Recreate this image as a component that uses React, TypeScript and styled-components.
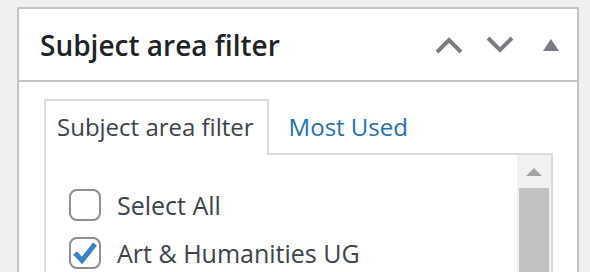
import React from "react";
import styled, { createGlobalStyle } from "styled-components";

const Global = createGlobalStyle`
  html, body { margin: 0; padding: 0; background: #f0f0f1; }
  body { font-family: "Open Sans", "Noto Sans", sans-serif; color: #3c434a; }
  * { box-sizing: border-box; }
`;

const Page = styled.div`
  padding: 7px 11px 0 17px;
`;

const Postbox = styled.section`
  background: #fff;
  border: 2px solid #c3c4c7;
  border-bottom: none;
`;

const Header = styled.header`
  display: flex;
  align-items: center;
  height: 73px;
  border-bottom: 2px solid #c3c4c7;
  padding-left: 21px;
`;

const Title = styled.h2`
  flex: 1;
  margin: 0;
  font-size: 28px;
  font-weight: 600;
  color: #1d2327;
`;

const HandleButton = styled.button<{ $w: number }>`
  width: ${(p) => p.$w}px;
  height: 71px;
  padding: 0;
  border: 0;
  background: transparent;
  display: flex;
  align-items: center;
  justify-content: center;
  color: #787c82;
  cursor: pointer;
`;

const Inside = styled.div`
  padding: 17px 24px 0 25px;
`;

const TabList = styled.ul`
  display: flex;
  align-items: flex-end;
  margin: 0 0 -2px;
  padding: 0;
  list-style: none;
  position: relative;
  z-index: 1;
`;

const Tab = styled.li<{ $active?: boolean }>`
  height: 56px;
  display: flex;
  align-items: center;
  padding: 0 13px 4px 11px;
  font-size: 24px;
  margin-right: ${(p) => (p.$active ? "7px" : "0")};
  color: ${(p) => (p.$active ? "#3c434a" : "#2271b1")};
  background: ${(p) => (p.$active ? "#fff" : "transparent")};
  border: 2px solid ${(p) => (p.$active ? "#dcdcde" : "transparent")};
  border-bottom: 0;
`;

const Panel = styled.div`
  display: flex;
  border: 2px solid #dcdcde;
  height: 200px;
  background: #fff;
`;

const List = styled.ul`
  flex: 1;
  margin: 0;
  padding: 34px 0 0 23px;
  list-style: none;
  display: flex;
  flex-direction: column;
  gap: 16px;
`;

const Row = styled.li`
  display: flex;
  align-items: center;
  gap: 16px;
  font-size: 25px;
  color: #3c434a;
  height: 32px;
`;

const Box = styled.span`
  width: 32px;
  height: 32px;
  flex: none;
  border: 2px solid #8c8f94;
  border-radius: 8px;
  background: #fff;
  display: flex;
  align-items: center;
  justify-content: center;
`;

const Scrollbar = styled.div`
  width: 34px;
  background: #f1f1f1;
  display: flex;
  flex-direction: column;
  align-items: center;
`;

const ScrollArrow = styled.div`
  height: 33px;
  display: flex;
  align-items: center;
  justify-content: center;
`;

const Thumb = styled.div`
  width: 30px;
  flex: 1;
  background: #c1c1c1;
`;

const ChevronUp = () => (
  <svg width="28" height="18" viewBox="0 0 28 18">
    <polyline points="2,16 14,4 26,16" fill="none" stroke="currentColor" strokeWidth="4" />
  </svg>
);
const ChevronDown = () => (
  <svg width="28" height="18" viewBox="0 0 28 18">
    <polyline points="2,2 14,14 26,2" fill="none" stroke="currentColor" strokeWidth="4" />
  </svg>
);
const Triangle = () => (
  <svg width="16" height="12" viewBox="0 0 16 12">
    <polygon points="0,12 8,0 16,12" fill="currentColor" />
  </svg>
);

const Check = () => (
  <svg width="26" height="24" viewBox="0 0 26 24">
    <polyline points="3,12 10,19.5 23,3" fill="none" stroke="#3582c4" strokeWidth="5" strokeLinejoin="miter" />
  </svg>
);

export default function App() {
  return (
    <>
      <Global />
      <Page>
        <Postbox>
          <Header>
            <Title>Subject area filter</Title>
            <HandleButton $w={51} aria-label="Move up">
              <ChevronUp />
            </HandleButton>
            <HandleButton $w={51} aria-label="Move down">
              <ChevronDown />
            </HandleButton>
            <HandleButton $w={52} aria-label="Toggle panel">
              <Triangle />
            </HandleButton>
          </Header>
          <Inside>
            <TabList>
              <Tab $active>Subject area filter</Tab>
              <Tab>Most Used</Tab>
            </TabList>
            <Panel>
              <List>
                <Row>
                  <Box />
                  Select All
                </Row>
                <Row>
                  <Box>
                    <Check />
                  </Box>
                  Art &amp; Humanities UG
                </Row>
              </List>
              <Scrollbar>
                <ScrollArrow>
                  <svg width="16" height="8" viewBox="0 0 16 8">
                    <polygon points="0,8 8,0 16,8" fill="#a3a3a3" />
                  </svg>
                </ScrollArrow>
                <Thumb />
              </Scrollbar>
            </Panel>
          </Inside>
        </Postbox>
      </Page>
    </>
  );
}
